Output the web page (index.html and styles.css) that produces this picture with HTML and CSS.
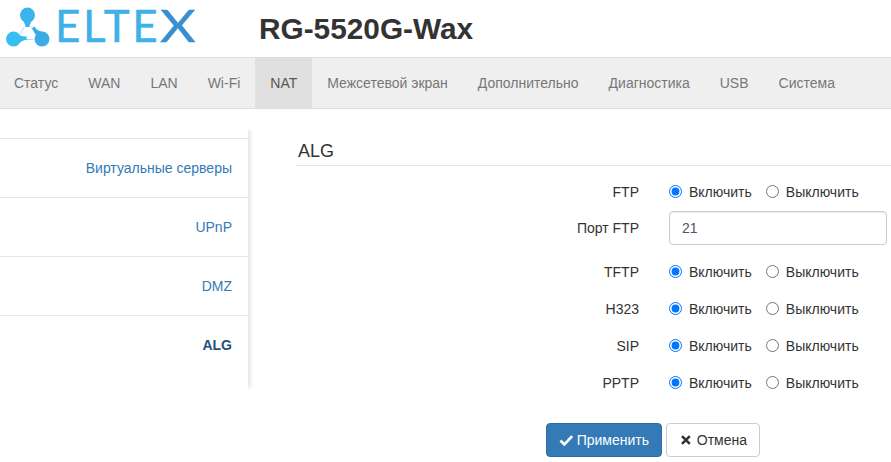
FILE: index.html
```html
<!DOCTYPE html>
<html lang="en">
<head>
    <meta charset="UTF-8">
    <meta name="viewport" content="width=device-width, initial-scale=1.0">
    <title>RG-5520G-Wax</title>
    <link rel="stylesheet" href="styles.css">
</head>
<body>
    <header class="header">
        <div class="logo">
            <svg class="logo-mark" width="50" height="50" viewBox="0 0 50 50">
                <path fill="none" stroke="#a9e0f7" stroke-width="1" d="M24 27L20 34M31 27L34 31M24 39.500H33"/>
                <g fill="#3ab4ea">
                    <circle cx="27.500" cy="15" r="7.500"/>
                    <path d="M21 18.500Q25 22 25.500 27H29.500Q30 22 34 18.500Z"/>
                </g>
                <g fill="#38bdf2">
                    <circle cx="13.500" cy="39" r="7.500"/>
                    <path d="M17 33Q21 37 26.500 36.500L27 39.500Q21 40.500 17 45Z"/>
                </g>
                <g fill="#39ace6">
                    <circle cx="42" cy="39" r="7.500"/>
                    <path d="M36 35Q33.500 31.500 32 28L34.500 26.500Q37 31 42 31.500Z"/>
                </g>
            </svg>
            <span class="logo-text">ELTE<span class="logo-x">X</span></span>
        </div>
        <h1 class="model">RG-5520G-Wax</h1>
    </header>

    <nav class="navbar">
        <a href="#">Статус</a>
        <a href="#">WAN</a>
        <a href="#">LAN</a>
        <a href="#">Wi-Fi</a>
        <a href="#" class="active">NAT</a>
        <a href="#">Межсетевой экран</a>
        <a href="#">Дополнительно</a>
        <a href="#">Диагностика</a>
        <a href="#">USB</a>
        <a href="#">Система</a>
    </nav>

    <div class="main">
        <aside class="sidebar">
            <a href="#">Виртуальные серверы</a>
            <a href="#">UPnP</a>
            <a href="#">DMZ</a>
            <a href="#" class="current">ALG</a>
        </aside>

        <section class="content">
            <h2>ALG</h2>
            <form class="form">
                <div class="row">
                    <label class="row-label">FTP</label>
                    <div class="choices">
                        <label><input type="radio" name="ftp" checked> Включить</label>
                        <label><input type="radio" name="ftp"> Выключить</label>
                    </div>
                </div>
                <div class="row row-input">
                    <label class="row-label">Порт FTP</label>
                    <input type="text" class="text-input" value="21">
                </div>
                <div class="row">
                    <label class="row-label">TFTP</label>
                    <div class="choices">
                        <label><input type="radio" name="tftp" checked> Включить</label>
                        <label><input type="radio" name="tftp"> Выключить</label>
                    </div>
                </div>
                <div class="row">
                    <label class="row-label">H323</label>
                    <div class="choices">
                        <label><input type="radio" name="h323" checked> Включить</label>
                        <label><input type="radio" name="h323"> Выключить</label>
                    </div>
                </div>
                <div class="row">
                    <label class="row-label">SIP</label>
                    <div class="choices">
                        <label><input type="radio" name="sip" checked> Включить</label>
                        <label><input type="radio" name="sip"> Выключить</label>
                    </div>
                </div>
                <div class="row">
                    <label class="row-label">PPTP</label>
                    <div class="choices">
                        <label><input type="radio" name="pptp" checked> Включить</label>
                        <label><input type="radio" name="pptp"> Выключить</label>
                    </div>
                </div>
                <div class="buttons">
                    <button type="button" class="btn btn-primary">
                        <svg width="15" height="12" viewBox="0 0 15 12"><path d="M1.500 6.500l4 4 8-8.500" fill="none" stroke="#fff" stroke-width="2.800"/></svg>
                        Применить
                    </button>
                    <button type="button" class="btn btn-default">
                        <svg width="10" height="10" viewBox="0 0 10 10"><path d="M1 1l8 8M9 1l-8 8" fill="none" stroke="#333" stroke-width="2.600"/></svg>
                        Отмена
                    </button>
                </div>
            </form>
        </section>
    </div>
</body>
</html>
```

FILE: styles.css
```css
* {
    box-sizing: border-box;
}
html, body {
    height: 462px;
    overflow: hidden;
}
body {
    margin: 0;
    font-family: "Liberation Sans", Arial, sans-serif;
    font-size: 14px;
    color: #333;
    background-color: #fff;
}
a {
    text-decoration: none;
}
.header {
    display: flex;
    align-items: center;
    height: 57px;
}
.logo {
    display: flex;
    align-items: center;
    width: 259px;
    height: 57px;
    padding-bottom: 3px;
}
.logo-mark {
    flex: none;
    align-self: flex-start;
}
.logo-text {
    margin-left: 5px;
    margin-bottom: 4px;
    font-family: Lato, sans-serif;
    font-size: 44px;
    line-height: 44px;
    letter-spacing: 2.500px;
    color: #3eb1e6;
    -webkit-text-stroke: 0.4px currentColor;
}
.logo-x {
    display: inline-block;
    color: #3a8fd0;
    transform: scaleX(1.25);
    transform-origin: left center;
}
.model {
    margin: 0;
    font-size: 29.800px;
    font-weight: bold;
}
.navbar {
    display: flex;
    height: 52px;
    background-color: #efefef;
    border-top: 1px solid #ddd;
    border-bottom: 1px solid #ddd;
}
.navbar a {
    padding: 0 15px;
    line-height: 50px;
    color: #777;
}
.navbar a:first-child {
    margin-left: -1px;
}
.navbar a.active {
    color: #555;
    background-color: #e0e0e0;
}
.main {
    display: flex;
    align-items: flex-start;
    padding-top: 20px;
}
.sidebar {
    flex: none;
    width: 248px;
    height: 260px;
    padding-top: 9px;
    box-shadow: 3px 0 5px -1px rgba(0, 0, 0, 0.13);
    clip-path: inset(0 -10px 0 0);
}
.sidebar a {
    display: block;
    height: 59px;
    padding-right: 16px;
    border-top: 1px solid #e7e7e7;
    line-height: 58px;
    text-align: right;
    color: #337ab7;
}
.sidebar a.current {
    font-weight: bold;
    color: #23527c;
}
.content {
    flex: 1;
    padding-left: 48px;
    padding-top: 10px;
}
.content h2 {
    margin: 0;
    height: 27px;
    padding-left: 2px;
    padding-top: 2px;
    font-size: 18px;
    font-weight: normal;
    line-height: 20px;
    border-bottom: 1px solid #e5e5e5;
}
.form {
    padding-top: 14px;
}
.row {
    display: flex;
    align-items: center;
    height: 23px;
    margin-bottom: 14px;
}
.row-input {
    height: 34px;
    margin-top: -6px;
    margin-bottom: 15px;
}
.row-label {
    width: 343px;
    text-align: right;
    color: #333;
}
.choices {
    display: flex;
    gap: 14px;
    margin-left: 30px;
}
.choices label {
    display: flex;
    align-items: center;
    gap: 7px;
}
.choices input {
    width: 13px;
    height: 13px;
    margin: 0;
}
.text-input {
    width: 218px;
    height: 34px;
    margin-left: 30px;
    padding: 6px 12px;
    font: inherit;
    color: #555;
    border: 1px solid #ccc;
    border-radius: 4px;
    box-shadow: inset 0 1px 1px rgba(0, 0, 0, 0.075);
}
.buttons {
    display: flex;
    gap: 4px;
    margin-top: 29px;
    margin-left: 250px;
}
.btn {
    display: flex;
    align-items: center;
    height: 34px;
    font: inherit;
    border: 1px solid #ccc;
    border-radius: 4px;
}
.btn-primary {
    gap: 3px;
    width: 116px;
    padding: 0 12px;
    color: #fff;
    background-color: #337ab7;
    border-color: #2e6da4;
}
.btn-default {
    gap: 6px;
    width: 94px;
    padding: 0 12px 0 14px;
    color: #333;
    background-color: #fff;
}
```
